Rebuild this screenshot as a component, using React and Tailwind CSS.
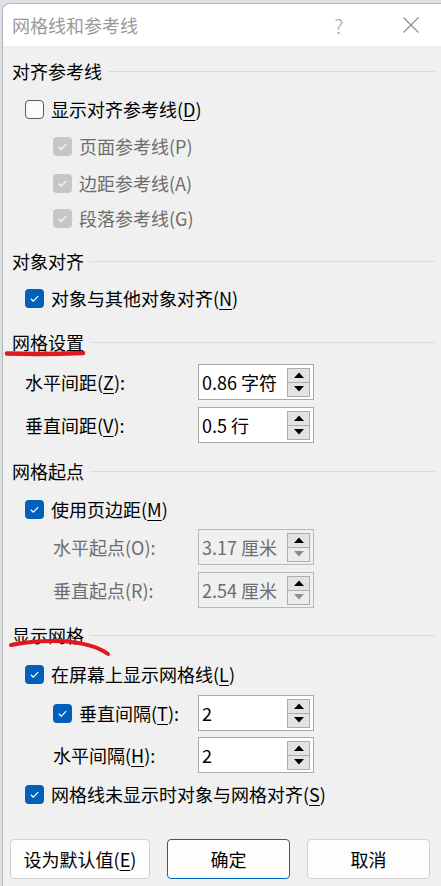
import React from "react";

const FONT = "font-['Noto_Sans_CJK_SC','Noto_Sans',sans-serif]";

function Check({ state }) {
  // state: "off" | "on" | "dis"
  if (state === "off") {
    return (
      <div className="w-[19px] h-[19px] shrink-0 rounded-[4px] border border-[#5a5a5a] bg-[#fbfbfb]" />
    );
  }
  return (
    <div
      className={`w-[19px] h-[19px] shrink-0 rounded-[4px] flex items-center justify-center ${
        state === "on" ? "bg-[#005fb8]" : "bg-[#c6c6c6]"
      }`}
    >
      <svg width="19" height="19" viewBox="0 0 19 19">
        <path d="M5.8 9.8l2.5 2.4 4.9-5" fill="none" stroke="#fff" strokeWidth="1.2" />
      </svg>
    </div>
  );
}

function Key({ k }) {
  return <span className="underline underline-offset-[3px] decoration-1">{k}</span>;
}

function Arrow({ up, color }) {
  return (
    <svg width="10" height="6" viewBox="0 0 10 6">
      <path d={up ? "M0 6L5 0.5L10 6Z" : "M0 0L5 5.5L10 0Z"} fill={color} />
    </svg>
  );
}

function Spin({ value, disabled }) {
  return (
    <div
      className={`w-[116px] h-[36px] shrink-0 flex items-center justify-between border pl-[3px] pr-[3px] ${
        disabled ? "bg-[#f0f0f0] border-[#b9b9b9] text-[#6d6d6d]" : "bg-white border-[#a9a9a9] text-black"
      }`}
    >
      <span className="leading-none">{value}</span>
      <div className="w-[23px] h-[29px] flex flex-col border border-[#adadad]">
        <div className="flex-1 flex items-center justify-center bg-[#e3e3e3]">
          <Arrow up color="#000" />
        </div>
        <div
          className={`flex-1 flex items-center justify-center border-t border-[#adadad] ${
            disabled ? "bg-[#ececec]" : "bg-[#e3e3e3]"
          }`}
        >
          <Arrow color={disabled ? "#8c8c8c" : "#000"} />
        </div>
      </div>
    </div>
  );
}

function Header({ text, mt, mark }) {
  return (
    <div className={`relative h-[34px] flex items-center pl-[9px] pr-[6px] ${mt}`}>
      <span className="leading-none">{text}</span>
      <div className="flex-1 h-px bg-[#dcdcdc] ml-[6px]" />
      {mark === "straight" && (
        <svg className="absolute left-0 top-[23px]" width="86" height="10" viewBox="0 0 86 10">
          <path d="M4 5.5Q40 6.5 80 5" fill="none" stroke="#e11720" strokeWidth="4.5" strokeLinecap="round" />
        </svg>
      )}
      {mark === "curve" && (
        <svg className="absolute left-[4px] top-[14px]" width="110" height="28" viewBox="0 0 110 28">
          <path d="M4 13C34 7 79 6 101 22" fill="none" stroke="#e11720" strokeWidth="4" strokeLinecap="round" />
        </svg>
      )}
    </div>
  );
}

function CheckRow({ state, indent, mt, children }) {
  return (
    <div className={`h-[34px] flex items-center gap-[7px] ${indent} ${mt}`}>
      <Check state={state} />
      <span className={`leading-none ${state === "dis" ? "text-[#6d6d6d]" : "text-black"}`}>{children}</span>
    </div>
  );
}

function FieldRow({ label, value, disabled, mt, indent, check }) {
  return (
    <div className={`h-[36px] flex items-center ${mt}`}>
      <div className={`w-[195px] shrink-0 flex items-center gap-[7px] ${indent}`}>
        {check && <Check state="on" />}
        <span className={`leading-none ${disabled ? "text-[#6d6d6d]" : "text-black"}`}>{label}</span>
      </div>
      <Spin value={value} disabled={disabled} />
    </div>
  );
}

export default function App() {
  return (
    <div className={`w-[441px] h-[886px] overflow-hidden bg-[#dde1e6] pl-[2px] pt-[3px] text-[18px] ${FONT}`}>
      <div className="h-full rounded-tl-[8px] border-l border-t border-[#b3b7bc] overflow-hidden flex flex-col">
        <div className="h-[42px] shrink-0 bg-white flex items-center pl-[9px] text-[#9a9a9a]">
          <span className="leading-none">网格线和参考线</span>
          <span className="ml-auto mr-[60px] text-[19px] font-light leading-none">?</span>
          <svg className="mr-[22px]" width="16" height="16" viewBox="0 0 16 16">
            <path d="M0.5 0.5L15.5 15.5M15.5 0.5L0.5 15.5" stroke="#8a8a8a" strokeWidth="1.1" />
          </svg>
        </div>

        <div className="flex-1 bg-[#f0f0f0] flex flex-col">
          <Header text="对齐参考线" mt="mt-[8px]" />
          <CheckRow state="off" indent="pl-[22px]" mt="mt-[4px]">
            显示对齐参考线(<Key k="D" />)
          </CheckRow>
          <CheckRow state="dis" indent="pl-[50px]" mt="mt-[3px]">
            页面参考线(P)
          </CheckRow>
          <CheckRow state="dis" indent="pl-[50px]" mt="mt-[3px]">
            边距参考线(A)
          </CheckRow>
          <CheckRow state="dis" indent="pl-[50px]" mt="mt-[1px]">
            段落参考线(G)
          </CheckRow>

          <Header text="对象对齐" mt="mt-[9px]" />
          <CheckRow state="on" indent="pl-[22px]" mt="mt-[3px]">
            对象与其他对象对齐(<Key k="N" />)
          </CheckRow>

          <Header text="网格设置" mt="mt-[10px]" mark="straight" />
          <FieldRow
            label={<>水平间距(<Key k="Z" />):</>}
            value="0.86 字符"
            indent="pl-[22px]"
            mt="mt-[5px]"
          />
          <FieldRow
            label={<>垂直间距(<Key k="V" />):</>}
            value="0.5 行"
            indent="pl-[22px]"
            mt="mt-[7px]"
          />

          <Header text="网格起点" mt="mt-[11px]" />
          <CheckRow state="on" indent="pl-[22px]" mt="mt-[4px]">
            使用页边距(<Key k="M" />)
          </CheckRow>
          <FieldRow label="水平起点(O):" value="3.17 厘米" disabled indent="pl-[50px]" mt="mt-[3px]" />
          <FieldRow label="垂直起点(R):" value="2.54 厘米" disabled indent="pl-[50px]" mt="mt-[7px]" />

          <Header text="显示网格" mt="mt-[10px]" mark="curve" />
          <CheckRow state="on" indent="pl-[22px]" mt="mt-[5px]">
            在屏幕上显示网格线(<Key k="L" />)
          </CheckRow>
          <FieldRow
            label={<>垂直间隔(<Key k="T" />):</>}
            value="2"
            check
            indent="pl-[50px]"
            mt="mt-[4px]"
          />
          <FieldRow
            label={<>水平间隔(<Key k="H" />):</>}
            value="2"
            indent="pl-[50px]"
            mt="mt-[6px]"
          />
          <CheckRow state="on" indent="pl-[22px]" mt="mt-[4px]">
            网格线未显示时对象与网格对齐(<Key k="S" />)
          </CheckRow>

          <div className="mt-[28px] flex items-center gap-[17px] pl-[7px]">
            <button className="w-[140px] h-[40px] rounded-[4px] border border-[#d0d0d0] bg-[#fdfdfd] leading-none">
              设为默认值(<Key k="E" />)
            </button>
            <button className="w-[123px] h-[40px] rounded-[4px] border border-[#0067c0] bg-[#fdfdfd] leading-none">
              确定
            </button>
            <button className="w-[123px] h-[40px] rounded-[4px] border border-[#d0d0d0] bg-[#fdfdfd] leading-none">
              取消
            </button>
          </div>
        </div>
      </div>
    </div>
  );
}
